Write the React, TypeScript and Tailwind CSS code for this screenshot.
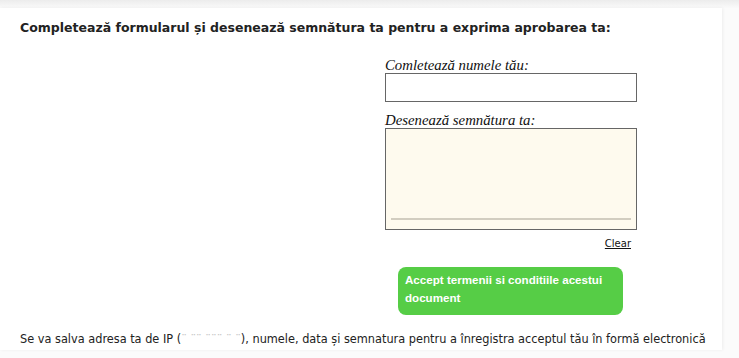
import React from 'react';

const App = () => {
    return (
        <div className="w-[739px] h-[358px] overflow-hidden bg-[#fbfbfb] relative">
            <div className="h-[8px] bg-gradient-to-b from-[#ececec] to-[#fafafa]" />
            <div className="w-[722px] h-[342px] bg-white shadow-[1px_0_3px_rgba(0,0,0,0.06)] pt-[10px] px-[20px] text-[#222]">
                <h1 className="text-[12.5px] font-bold font-['DejaVu_Sans',sans-serif] leading-[20px]">
                    Completează formularul și desenează semnătura ta pentru a exprima aprobarea ta:
                </h1>

                <div className="ml-[365px] mt-[19px] w-[252px]">
                    <label className="block italic text-[14.8px] leading-[16px] font-['Liberation_Serif',serif] text-[#111]">
                        Comletează numele tău:
                    </label>
                    <input
                        type="text"
                        className="block mt-0 w-[252px] h-[29px] border border-[#666] bg-white outline-none"
                    />

                    <label className="block mt-[10px] italic text-[14.8px] leading-[16px] font-['Liberation_Serif',serif] text-[#111]">
                        Desenează semnătura ta:
                    </label>
                    <div className="mt-0 w-[252px] h-[102px] border border-[#666] bg-[#fefaee] flex items-end px-[5px] pb-[9px]">
                        <div className="h-[2px] w-full bg-[#d2cdc0]" />
                    </div>

                    <div className="flex justify-end pr-[6px] mt-[7px]">
                        <a className="text-[10px] font-['DejaVu_Sans',sans-serif] underline text-[#111] leading-[14px]">Clear</a>
                    </div>

                    <button className="block ml-[13px] mt-[16px] w-[225px] h-[48px] rounded-[8px] bg-[#56cd46] text-left px-[7px] pb-[4px] text-white font-bold text-[11.6px] leading-[18px] font-['Liberation_Sans',sans-serif]">
                        Accept termenii si conditiile acestui document
                    </button>
                </div>

                <p className="mt-[16px] text-[12.6px] font-['DejaVu_Sans_Condensed','DejaVu_Sans',sans-serif] text-[#222] leading-[16px] whitespace-nowrap">
                    Se va salva adresa ta de IP (<span className="text-[#c8c8c8]">¨ ¨¨ ¨¨¨ ¨ ¨</span>), numele, data și semnatura pentru a înregistra acceptul tău în formă electronică
                </p>
            </div>
        </div>
    );
};

export default App;
